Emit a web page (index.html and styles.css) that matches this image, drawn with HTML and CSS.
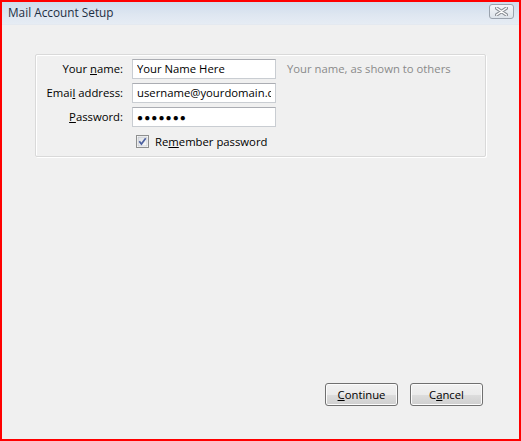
FILE: index.html
```html
<!DOCTYPE html>
<html lang="en">
<head>
  <meta charset="UTF-8"/>
  <title>Mail Account Setup</title>
  <link rel="stylesheet" href="styles.css">
</head>
<body>
  <div class="window">
    <!-- Title bar -->
    <div class="titlebar">
      <span class="title">Mail Account Setup</span>
      <button class="close-btn" aria-label="Close">
        <svg width="13" height="9" viewBox="0 0 13 9">
          <path d="M1.5 1 L11.5 8 M11.5 1 L1.5 8" stroke="#8a8f96" stroke-width="3.4" stroke-linecap="round"/>
          <path d="M1.5 1 L11.5 8 M11.5 1 L1.5 8" stroke="#fff" stroke-width="1.4" stroke-linecap="round"/>
        </svg>
      </button>
    </div>

    <!-- Form -->
    <div class="content">
      <div class="panel">
        <label class="label" for="name">Your <u>n</u>ame:</label>
        <input class="field" id="name" type="text" value="Your Name Here"/>
        <span class="hint">Your name, as shown to others</span>

        <label class="label" for="email">Emai<u>l</u> address:</label>
        <input class="field" id="email" type="text" value="username@yourdomain.com"/>
        <span></span>

        <label class="label" for="pass"><u>P</u>assword:</label>
        <div class="field dots">&#9679;&#9679;&#9679;&#9679;&#9679;&#9679;&#9679;</div>
        <span></span>

        <span></span>
        <div class="remember">
          <svg class="check" width="13" height="13" viewBox="0 0 13 13">
            <defs>
              <linearGradient id="cb" x1="0" y1="0" x2="1" y2="1">
                <stop offset="0" stop-color="#dcdfe3"/>
                <stop offset="1" stop-color="#fbfbfb"/>
              </linearGradient>
            </defs>
            <rect x="0.5" y="0.5" width="12" height="12" fill="#fff" stroke="#8e8f8f"/>
            <rect x="2" y="2" width="9" height="9" fill="url(#cb)" stroke="#b5bac0" stroke-width="0.6"/>
            <path d="M3.3 6.2 L5.4 9 L9.7 3.2" fill="none" stroke="#4c61a0" stroke-width="1.7"/>
          </svg>
          <span>Re<u>m</u>ember password</span>
        </div>
        <span></span>
      </div>
    </div>

    <!-- Buttons -->
    <div class="actions">
      <button class="btn"><u>C</u>ontinue</button>
      <button class="btn">C<u>a</u>ncel</button>
    </div>
  </div>
</body>
</html>
```

FILE: styles.css
```css
*, *::before, *::after { box-sizing: border-box; }

body {
  margin: 0;
  font-family: 'Open Sans', 'Noto Sans', sans-serif;
  font-size: 11.3px;
  color: #000;
  background: #fff;
}

.window {
  width: 521px; height: 441px;
  border: 2px solid #ff0000;
  background: #f0f0f0;
  display: flex; flex-direction: column;
}

/* Title bar */
.titlebar {
  height: 23px;
  display: flex; align-items: center;
  justify-content: space-between;
  padding: 0 5px 0 6px;
  background: linear-gradient(#cfdcec, #dfe7f1 60%, #e6ecf4);
  border-bottom: 1px solid #e4e9f0;
}
.title { color: #1e2f43; font-size: 11.8px; margin-top: -2px; }
.close-btn {
  width: 25px; height: 15px;
  padding: 0; margin-top: -3px;
  display: flex; align-items: center; justify-content: center;
  border: 1px solid #9aa2ad; border-radius: 3px;
  background: linear-gradient(#f4f6f9, #dde3ea);
}

/* Form panel */
.content { flex: 1; padding: 29px 33px 0; }
.panel {
  width: 451px; height: 103px;
  border: 1px solid #d9d9d9;
  box-shadow: inset 1px 1px 0 #fff, 1px 1px 0 #fff;
  border-radius: 2px;
  padding-top: 4px;
  display: grid;
  grid-template-columns: 87px 144px auto;
  grid-auto-rows: 20px;
  column-gap: 9px; row-gap: 4px;
  align-items: center;
}
.label { text-align: right; margin-top: -1px; }
.field {
  height: 20px; width: 144px;
  border: 1px solid #c9cdd2;
  border-top-color: #abadb3;
  background: #fff;
  font: inherit; color: #000;
  padding: 0 4px 1px;
  margin: 0;
  outline: none;
}
.dots {
  display: flex; align-items: center;
  font-size: 10px; letter-spacing: 1.1px;
  padding-left: 4px;
}
.hint { color: #8a8a8a; margin-left: 2px; margin-top: -1px; }
.remember {
  display: flex; align-items: center; gap: 6px;
  grid-column: 2 / 4;
  padding-left: 4px;
}
.check { flex: none; }

/* Bottom buttons */
.actions {
  display: flex; justify-content: flex-end;
  gap: 12px;
  padding: 0 36px 33px 0;
}
.btn {
  width: 73px; height: 23px;
  font: inherit; color: #000;
  border: 1px solid #707070; border-radius: 3px;
  background: linear-gradient(#f2f2f2 0%, #ebebeb 50%, #dddddd 51%, #cfcfcf 100%);
  box-shadow: inset 0 0 0 1px #fcfcfc;
  padding: 0;
}
```
